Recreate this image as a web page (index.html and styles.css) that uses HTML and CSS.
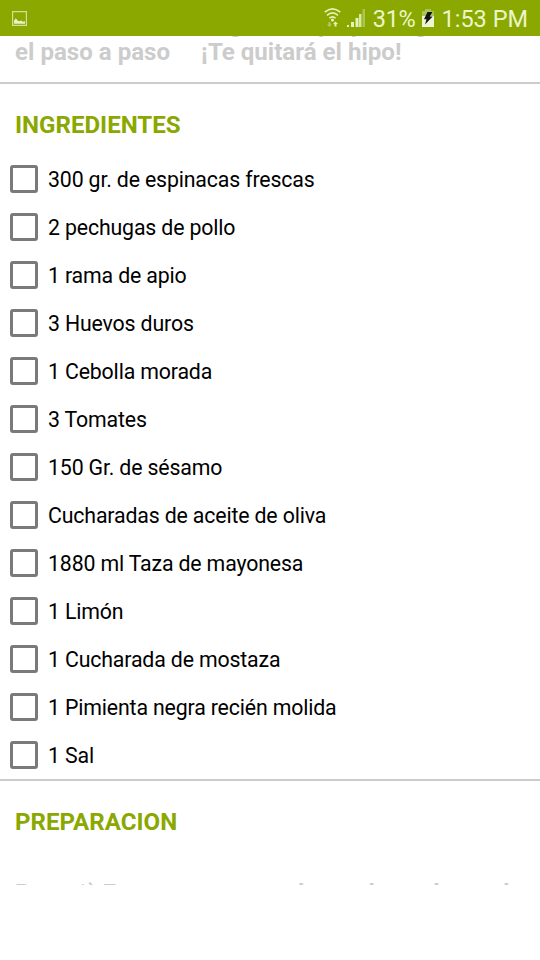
FILE: index.html
```html
<!DOCTYPE html>
<html lang="es">
<head>
    <meta charset="UTF-8">
    <meta name="viewport" content="width=device-width, initial-scale=1.0">
    <title>Receta</title>
    <link rel="stylesheet" href="styles.css">
</head>
<body>

<header class="status-bar">
    <svg class="icon-image" width="15" height="15" viewBox="0 0 15 15">
        <path d="M.6.6h13.8v13.8H.6z" fill="none" stroke="#d0e09a" stroke-width="1.2"/>
        <path d="M2 12.700V9.800l1.800-2.600 2 2.600 1.600.500 1.800-.800 1.500 1.200 2.300-.400v2.400z" fill="#e6f3c6"/>
    </svg>
    <div class="status-info">
        <svg class="icon-wifi" width="17" height="20" viewBox="0 0 17 20">
            <g fill="none" stroke="#e4f4b9" stroke-width="1.6">
                <path d="M.7 4.200Q8.500-2.400 16.300 4.200"/>
                <path d="M3 7.300q5.500-4.800 11 0"/>
                <path d="M5.400 10.200q3.100-2.800 6.200 0"/>
            </g>
            <circle cx="8.500" cy="12" r="1.600" fill="#e4f4b9"/>
            <path d="M4.500 14h2v2.500H8L5.500 19 3 16.500h1.500z" fill="#b0cc5c"/>
            <path d="M9 16l2.500-2.500L14 16h-1.500v2.500h-2V16z" fill="#e4f4b9"/>
        </svg>
        <svg class="icon-signal" width="18" height="18" viewBox="0 0 18 18">
            <path d="M0 16h2v2H0zM4 13h3v5H4zM8.500 9h3v9h-3z" fill="#e4f4b9"/>
            <path d="M12 5h2.500v13H12z" fill="#d7eaa2"/>
            <path d="M15.500 0H18v18h-2.500z" fill="#a9c751"/>
        </svg>
        <span class="battery-level">31%</span>
        <svg class="icon-battery" width="12" height="18" viewBox="0 0 12 18">
            <path d="M3 0h6v2h3v6H0V2h3z" fill="#a9c556"/>
            <path d="M0 7h12v11H0z" fill="#edf6d3"/>
            <path d="M5.500 3h5L7.700 7.600h3L3 15.500l1.500-5.300H2z" fill="#111"/>
        </svg>
        <span class="clock">1:53 PM</span>
    </div>
</header>

<main class="recipe">
    <p class="intro">Como hacer esta la gran crepa y una gran<br>el paso a paso <span class="exclaim">¡Te quitará el hipo!</span></p>

    <section class="section">
        <h2>INGREDIENTES</h2>
        <ul class="ingredients">
            <li><label><input type="checkbox">300 gr. de espinacas frescas</label></li>
            <li><label><input type="checkbox">2 pechugas de pollo</label></li>
            <li><label><input type="checkbox">1 rama de apio</label></li>
            <li><label><input type="checkbox">3 Huevos duros</label></li>
            <li><label><input type="checkbox">1 Cebolla morada</label></li>
            <li><label><input type="checkbox">3 Tomates</label></li>
            <li><label><input type="checkbox">150 Gr. de sésamo</label></li>
            <li><label><input type="checkbox">Cucharadas de aceite de oliva</label></li>
            <li><label><input type="checkbox">1880 ml Taza de mayonesa</label></li>
            <li><label><input type="checkbox">1 Limón</label></li>
            <li><label><input type="checkbox">1 Cucharada de mostaza</label></li>
            <li><label><input type="checkbox">1 Pimienta negra recién molida</label></li>
            <li><label><input type="checkbox">1 Sal</label></li>
        </ul>
    </section>

    <section class="section">
        <h2>PREPARACION</h2>
        <p class="step">Paso 1) Empezamos asando en el pan de una hora</p>
    </section>
</main>

</body>
</html>
```
FILE: styles.css
```css
* {
    box-sizing: border-box;
}
body {
    margin: 0;
    height: 960px;
    overflow: hidden;
    background: #fff;
    color: #000;
    font-family: Roboto, 'Liberation Sans', sans-serif;
}
.status-bar {
    height: 36px;
    padding: 0 12px;
    display: flex;
    align-items: center;
    justify-content: space-between;
    background: #8aa800;
    color: #eaf6c9;
    font-size: 23.5px;
}
.status-bar svg {
    display: block;
    flex: none;
}
.status-info {
    display: flex;
    align-items: center;
    white-space: nowrap;
}
.battery-level,
.clock {
    padding-top: 2px;
}
.icon-wifi {
    margin-right: 6px;
}
.icon-signal {
    margin-right: 8px;
}
.icon-battery {
    margin: 0 8px 0 6px;
}
.battery-level {
    letter-spacing: -0.3px;
}
.recipe {
    height: 849px;
    overflow: hidden;
}
.intro {
    margin: -26px 0 0;
    padding: 0 15px;
    height: 72px;
    color: #ccc;
    font-size: 24.1px;
    font-weight: bold;
    line-height: 28px;
    white-space: nowrap;
}
.exclaim {
    margin-left: 25px;
}
.section {
    border-top: 2px solid #ccc;
}
.section h2 {
    margin: 0;
    padding: 27px 15px 0;
    height: 71px;
    color: #8aa800;
    font-size: 24.1px;
    line-height: 28px;
}
.ingredients {
    margin: 0;
    padding: 0;
    list-style: none;
}
.ingredients label {
    display: flex;
    align-items: center;
    height: 48px;
    padding-left: 10px;
    font-size: 21.3px;
    letter-spacing: -0.15px;
}
.ingredients input {
    appearance: none;
    width: 28px;
    height: 28px;
    margin: 0 10px 0 0;
    border: 3px solid #7a7a7a;
    border-radius: 3px;
}
.step {
    margin: 0;
    padding: 27px 15px 0;
    color: #ccc;
    font-size: 23.8px;
    font-weight: bold;
    line-height: 28px;
    white-space: nowrap;
}
```
